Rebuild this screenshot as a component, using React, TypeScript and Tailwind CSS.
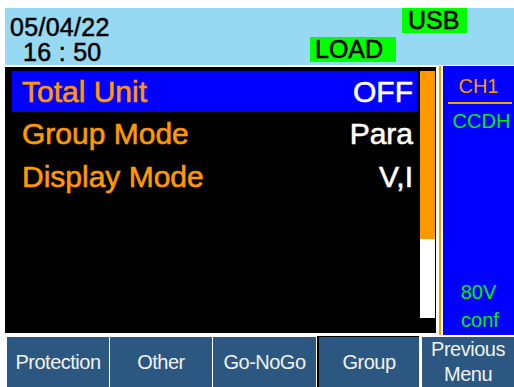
import React from 'react';

const MENU = [
  { label: 'Total Unit', value: 'OFF', active: true },
  { label: 'Group Mode', value: 'Para' },
  { label: 'Display Mode', value: 'V,I' },
];

const SoftKey = ({ children, w, pressed }: { children: React.ReactNode; w: string; pressed?: boolean }) => (
  <div
    className={`${w} flex items-center justify-center bg-[#2b5781] text-[#f2f2f2] text-[20px] tracking-[-0.5px] leading-[25px] text-center
      ${pressed ? 'h-[51px] border-t border-l-2 border-black' : 'h-[50px]'}`}
  >
    {children}
  </div>
);

const App: React.FC = () => {
  return (
    <div className="w-[514px] h-[387px] bg-white overflow-hidden font-['Liberation_Sans',Arial,sans-serif]">
      {/* Status bar */}
      <div className="mt-[8px] ml-[5px] h-[57px] bg-[#97d8f2] flex text-black [-webkit-text-stroke-width:0.5px]">
        <div className="w-[305px] pt-[7px] pl-[5px] text-[25px] leading-[25px] tracking-[0.3px]">
          <div>05/04/22</div>
          <div className="pl-[13px]">16 : 50</div>
        </div>
        <div className="self-end mb-[3px] w-[86px] h-[25px] bg-[#00ff00] pl-[5px] text-[25px] leading-[25px]">LOAD</div>
        <div className="self-start ml-[6px] w-[65px] h-[25px] bg-[#00ff00] pl-[6px] text-[25px] leading-[24px]">USB</div>
      </div>

      {/* Main area */}
      <div className="mt-[1px] flex h-[269px]">
        <div className="ml-[5px] mt-[1px] w-[431px] h-[266px] bg-black flex pt-[4px] pl-[7px]">
          <div className="w-[406px] [-webkit-text-stroke-width:0.6px]">
            {MENU.map((item) => (
              <div
                key={item.label}
                className={`flex items-center justify-between pl-[10px] pr-[5px] text-[30px] leading-[41px]
                  ${item.active ? 'bg-[#0000ff] h-[41px]' : 'h-[43px]'}`}
              >
                <span className="text-[#ff9900]">{item.label}</span>
                <span className="text-white">{item.value}</span>
              </div>
            ))}
          </div>
          {/* Scrollbar */}
          <div className="ml-[2px] w-[15px] h-[247px] flex flex-col">
            <div className="h-[168px] bg-[#ff9900]" />
            <div className="h-[79px] bg-white" />
          </div>
        </div>
        <div className="ml-[3px] w-[2px] h-[269px] bg-[#ff9900]" />
        <div className="ml-[2px] w-[71px] h-[269px] bg-[#0000ff] flex flex-col items-center pt-[10px] pb-[1px] text-[20px] leading-[20px]">
          <div className="text-[#ff9900]">CH1</div>
          <div className="mt-[6px] ml-[3px] w-[64px] h-[2px] bg-[#ff9900]" />
          <div className="mt-[7px] ml-[6px] text-[#00ee00]">CCDH</div>
          <div className="mt-auto text-[#00ee00] leading-[28px]">80V</div>
          <div className="ml-[3px] text-[#00ee00] leading-[28px]">conf</div>
        </div>
      </div>

      {/* Soft keys */}
      <div className="mt-[1px] ml-[7px] flex items-end">
        <SoftKey w="w-[102px]">Protection</SoftKey>
        <div className="ml-[1px]"><SoftKey w="w-[102px]">Other</SoftKey></div>
        <div className="ml-[1px]"><SoftKey w="w-[103px]">Go-NoGo</SoftKey></div>
        <div className="ml-[1px]"><SoftKey w="w-[102px]" pressed>Group</SoftKey></div>
        <div className="ml-[3px]"><SoftKey w="w-[92px]">Previous<br />Menu</SoftKey></div>
      </div>
    </div>
  );
};

export default App;
